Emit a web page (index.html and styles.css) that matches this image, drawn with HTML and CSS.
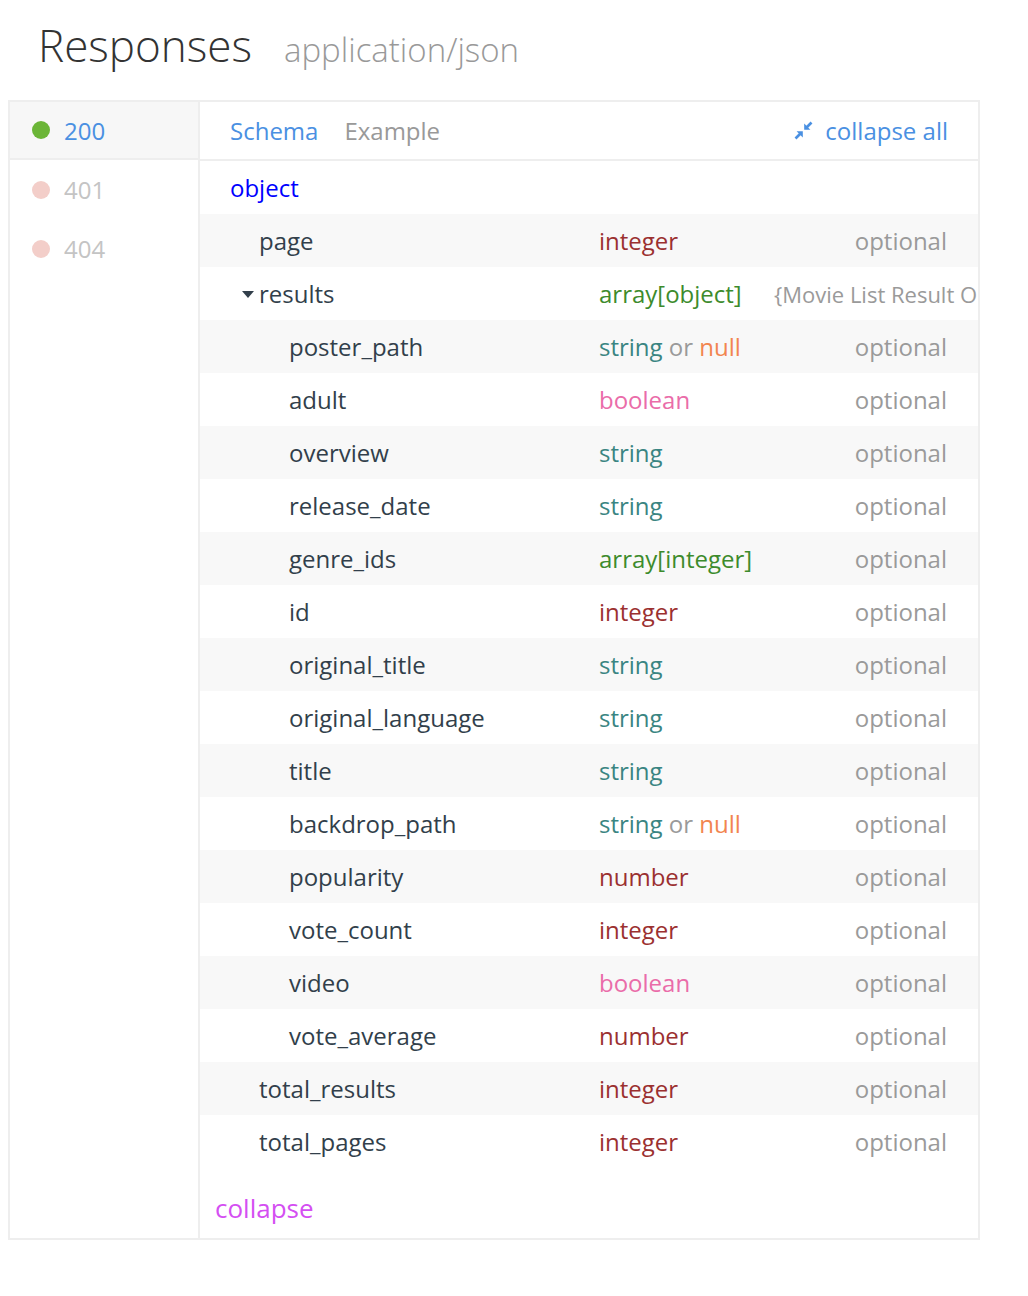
FILE: index.html
```html
<!DOCTYPE html>
<html>
<head>
<meta charset="utf-8">
<link rel="stylesheet" href="styles.css">
</head>
<body>
<div class="header">
  <h1 class="title">Responses</h1>
  <span class="mime">application/json</span>
</div>
<div class="box">
  <div class="nav">
    <div class="nav-item active"><span class="dot ok"></span><span class="code">200</span></div>
    <div class="nav-item"><span class="dot err"></span><span class="code">401</span></div>
    <div class="nav-item"><span class="dot err"></span><span class="code">404</span></div>
  </div>
  <div class="panel">
    <div class="tabs">
      <span class="tab active">Schema</span>
      <span class="tab">Example</span>
      <span class="collapse-all">
        <svg class="icon" width="19" height="19" viewBox="0 0 19 19">
          <path d="M17.5 1.5 L12 7" stroke="#4a90e2" stroke-width="2.6" fill="none"/>
          <path d="M10.2 2.6 L10.2 8.8 L16.4 8.8 Z" fill="#4a90e2"/>
          <path d="M1.5 17.5 L7 12" stroke="#4a90e2" stroke-width="2.6" fill="none"/>
          <path d="M2.6 10.2 L8.8 10.2 L8.8 16.4 Z" fill="#4a90e2"/>
        </svg>
        collapse all
      </span>
    </div>
    <div class="root">object</div>
    <div class="rows">
      <div class="row l1"><span class="name">page</span><span class="type t-int">integer</span><span class="opt">optional</span></div>
      <div class="row l1 alt"><span class="name"><span class="caret"></span>results</span><span class="type t-arr fixed">array[object]</span><span class="desc">{Movie List Result Object}</span></div>
      <div class="row l2"><span class="name">poster_path</span><span class="type"><span class="t-str">string</span> <span class="or">or</span> <span class="t-null">null</span></span><span class="opt">optional</span></div>
      <div class="row l2 alt"><span class="name">adult</span><span class="type t-bool">boolean</span><span class="opt">optional</span></div>
      <div class="row l2"><span class="name">overview</span><span class="type t-str">string</span><span class="opt">optional</span></div>
      <div class="row l2 alt"><span class="name">release_date</span><span class="type t-str">string</span><span class="opt">optional</span></div>
      <div class="row l2"><span class="name">genre_ids</span><span class="type t-arr">array[integer]</span><span class="opt">optional</span></div>
      <div class="row l2 alt"><span class="name">id</span><span class="type t-int">integer</span><span class="opt">optional</span></div>
      <div class="row l2"><span class="name">original_title</span><span class="type t-str">string</span><span class="opt">optional</span></div>
      <div class="row l2 alt"><span class="name">original_language</span><span class="type t-str">string</span><span class="opt">optional</span></div>
      <div class="row l2"><span class="name">title</span><span class="type t-str">string</span><span class="opt">optional</span></div>
      <div class="row l2 alt"><span class="name">backdrop_path</span><span class="type"><span class="t-str">string</span> <span class="or">or</span> <span class="t-null">null</span></span><span class="opt">optional</span></div>
      <div class="row l2"><span class="name">popularity</span><span class="type t-int">number</span><span class="opt">optional</span></div>
      <div class="row l2 alt"><span class="name">vote_count</span><span class="type t-int">integer</span><span class="opt">optional</span></div>
      <div class="row l2"><span class="name">video</span><span class="type t-bool">boolean</span><span class="opt">optional</span></div>
      <div class="row l2 alt"><span class="name">vote_average</span><span class="type t-int">number</span><span class="opt">optional</span></div>
      <div class="row l1"><span class="name">total_results</span><span class="type t-int">integer</span><span class="opt">optional</span></div>
      <div class="row l1 alt"><span class="name">total_pages</span><span class="type t-int">integer</span><span class="opt">optional</span></div>
    </div>
    <div class="collapse">collapse</div>
  </div>
</div>
</body>
</html>
```
FILE: styles.css
```css
* { box-sizing: border-box; }
body {
  margin: 0;
  font-family: "Open Sans", "Liberation Sans", sans-serif;
  background: #fff;
  color: #323f4b;
}
.header {
  height: 100px;
  display: flex;
  align-items: baseline;
  padding: 15px 0 0 38px;
}
.title {
  margin: 0;
  font-size: 44px;
  font-weight: 300;
  color: #333;
  line-height: 60px;
}
.mime {
  margin-left: 32px;
  font-size: 33px;
  font-weight: 300;
  color: #999;
}
.box {
  margin-left: 8px;
  width: 972px;
  border: 2px solid #eeeeee;
  display: flex;
  font-size: 24px;
}
.nav {
  width: 190px;
  border-right: 2px solid #eeeeee;
  flex-shrink: 0;
}
.nav-item {
  height: 59px;
  display: flex;
  align-items: center;
  padding-left: 22px;
  color: #c4c4c4;
}
.nav-item.active {
  height: 58px;
  background: #f7f7f7;
  border-bottom: 2px solid #eeeeee;
  color: #4a90e2;
}
.dot {
  width: 18px;
  height: 18px;
  border-radius: 50%;
  margin-right: 14px;
}
.dot.ok { background: #6bb537; }
.dot.err { background: #f3cec9; }
.panel {
  flex: 1;
  overflow: hidden;
  min-width: 0;
}
.tabs {
  height: 59px;
  border-bottom: 2px solid #eeeeee;
  display: flex;
  align-items: center;
  padding: 0 30px 0 30px;
}
.tab {
  color: #999;
  margin-right: 26px;
}
.tab.active { color: #4a90e2; }
.collapse-all {
  margin-left: auto;
  color: #4a90e2;
  display: flex;
  align-items: center;
}
.icon { margin-right: 12px; }
.root {
  height: 53px;
  display: flex;
  align-items: center;
  padding-left: 30px;
  color: #0000ff;
}
.row {
  height: 53px;
  display: flex;
  align-items: center;
  background: #f8f8f8;
  padding-right: 31px;
  white-space: nowrap;
}
.row.alt { background: #fff; }
.name {
  width: 399px;
  flex-shrink: 0;
  color: #323f4b;
  position: relative;
}
.l1 .name { padding-left: 59px; }
.l2 .name { padding-left: 89px; }
.caret {
  position: absolute;
  left: 42px;
  top: 50%;
  margin-top: -3px;
  width: 0;
  height: 0;
  border-left: 6px solid transparent;
  border-right: 6px solid transparent;
  border-top: 7px solid #323f4b;
}
.type { flex: 1; }
.type.fixed { flex: 0 0 175px; }
.opt { color: #9a9a9a; }
.desc { color: #9a9a9a; font-size: 22px; }
.t-int { color: #9b3030; }
.t-str { color: #3a8582; }
.t-null { color: #f28550; }
.t-bool { color: #ea6ca9; }
.t-arr { color: #3d8b2c; }
.or { color: #9a9a9a; }
.collapse {
  padding: 22px 0 12px 15px;
  font-size: 26px;
  line-height: 36px;
  color: #d44ff2;
}
```
